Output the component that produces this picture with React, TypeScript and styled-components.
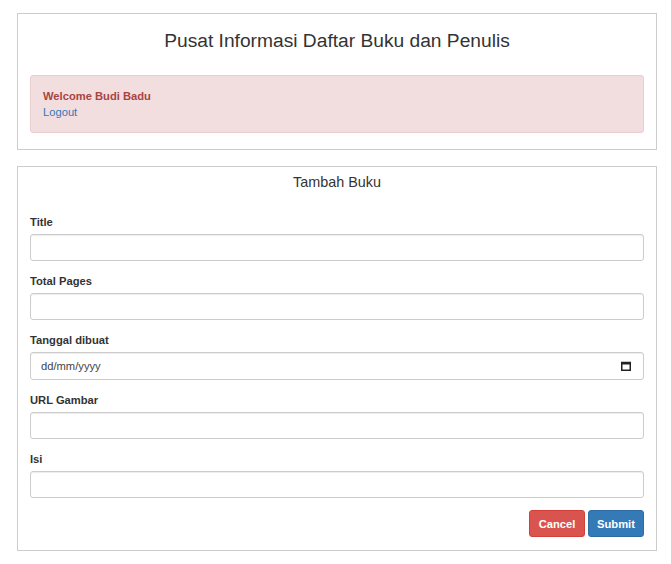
import React from "react";
import styled, { createGlobalStyle } from "styled-components";

const Global = createGlobalStyle`
  * { box-sizing: border-box; }
  body {
    margin: 0;
    background: #fff;
    font-family: "Liberation Sans", Arial, sans-serif;
    font-size: 11.2px;
    line-height: 16px;
    color: #333;
  }
`;

const Page = styled.div`
  padding: 13px 14px 14px 17px;
  display: flex;
  flex-direction: column;
  gap: 16px;
`;

const Panel = styled.section<{ $pad?: string }>`
  border: 1px solid #ccc;
  background: #fff;
  padding: ${(p) => p.$pad ?? "12px"};
  display: flex;
  flex-direction: column;
`;

const MainTitle = styled.h1`
  margin: 0 0 23px;
  font-size: 19.2px;
  line-height: 22px;
  font-weight: 400;
  text-align: center;
  color: #333;
`;

const Alert = styled.div`
  background: #f2dede;
  border: 1px solid #ebccd1;
  border-radius: 3px;
  padding: 12px;
  color: #a94442;
  display: flex;
  flex-direction: column;
`;

const Welcome = styled.strong`
  font-weight: 700;
`;

const Link = styled.a`
  color: #337ab7;
  text-decoration: none;
  cursor: pointer;
`;

const SubTitle = styled.h2`
  margin: 0 0 22px;
  font-size: 14.4px;
  line-height: 20px;
  font-weight: 400;
  text-align: center;
  color: #333;
`;

const Form = styled.form`
  display: flex;
  flex-direction: column;
  gap: 12px;
`;

const Group = styled.div`
  display: flex;
  flex-direction: column;
  gap: 4px;
`;

const Label = styled.label`
  font-weight: 700;
  font-size: 11.2px;
  line-height: 16px;
  color: #333;
`;

const Field = styled.div`
  position: relative;
`;

const Input = styled.input`
  display: block;
  width: 100%;
  height: 27.2px;
  padding: 5px 10px;
  font-family: "Liberation Sans", Arial, sans-serif;
  font-size: 11.2px;
  color: #555;
  background: #fff;
  border: 1px solid #ccc;
  border-radius: 3px;
  box-shadow: inset 0 1px 1px rgba(0, 0, 0, 0.075);
  outline: none;
  &::placeholder {
    color: #444;
    opacity: 1;
  }
`;

const CalIcon = styled.svg`
  position: absolute;
  right: 13px;
  top: 9px;
  width: 10px;
  height: 10px;
  pointer-events: none;
`;

const Actions = styled.div`
  display: flex;
  justify-content: flex-end;
  gap: 3px;
`;

const Button = styled.button<{ $variant: "danger" | "primary" }>`
  height: 27.2px;
  padding: 0 8px;
  min-width: 56px;
  text-align: center;
  font-family: "Liberation Sans", Arial, sans-serif;
  font-size: 11.2px;
  font-weight: 700;
  color: #fff;
  border-radius: 3px;
  border: 1px solid ${(p) => (p.$variant === "danger" ? "#d43f3a" : "#2e6da4")};
  background: ${(p) => (p.$variant === "danger" ? "#d9534f" : "#337ab7")};
  cursor: pointer;
`;

const fields = ["Title", "Total Pages"];

export default function App() {
  return (
    <>
      <Global />
      <Page>
        <Panel $pad="16px 12px 16px">
          <MainTitle>Pusat Informasi Daftar Buku dan Penulis</MainTitle>
          <Alert>
            <Welcome>Welcome Budi Badu</Welcome>
            <Link>Logout</Link>
          </Alert>
        </Panel>
        <Panel $pad="5px 12px 13px">
          <SubTitle>Tambah Buku</SubTitle>
          <Form onSubmit={(e) => e.preventDefault()}>
            {fields.map((f) => (
              <Group key={f}>
                <Label>{f}</Label>
                <Input type="text" />
              </Group>
            ))}
            <Group>
              <Label>Tanggal dibuat</Label>
              <Field>
                <Input type="text" placeholder="dd/mm/yyyy" />
                <CalIcon viewBox="0 0 10 10">
                  <rect x="0.75" y="1.5" width="8.5" height="7.75" fill="none" stroke="#222" strokeWidth="1.5" />
                  <rect x="0" y="1" width="10" height="2.5" fill="#222" />
                </CalIcon>
              </Field>
            </Group>
            <Group>
              <Label>URL Gambar</Label>
              <Input type="text" />
            </Group>
            <Group>
              <Label>Isi</Label>
              <Input type="text" />
            </Group>
            <Actions>
              <Button type="button" $variant="danger">Cancel</Button>
              <Button type="submit" $variant="primary">Submit</Button>
            </Actions>
          </Form>
        </Panel>
      </Page>
    </>
  );
}
